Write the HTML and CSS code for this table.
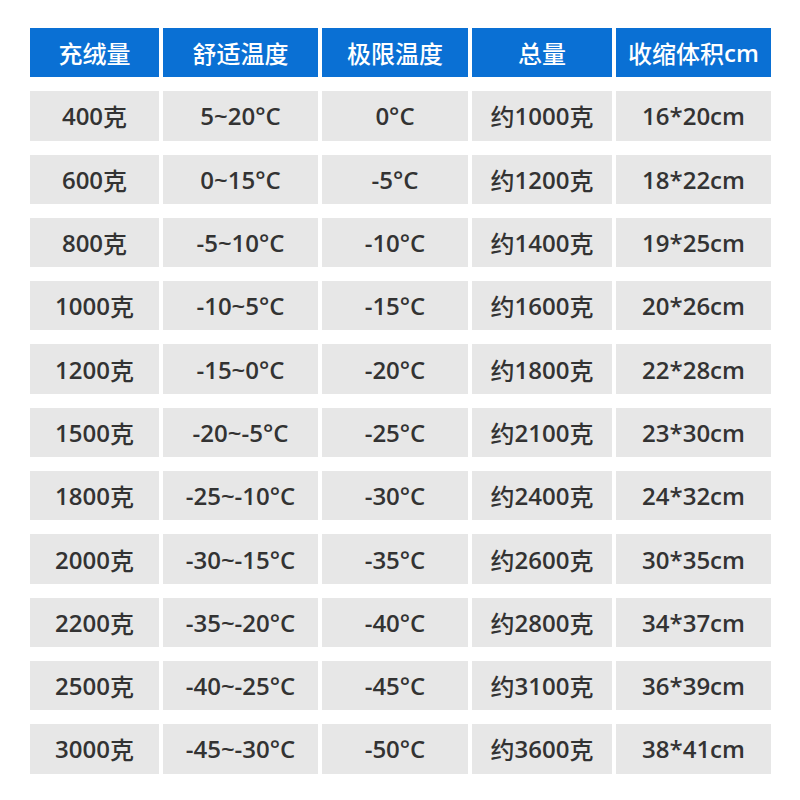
FILE: index.html
```html
<!DOCTYPE html>
<html lang="zh-CN">
<head>
<meta charset="utf-8">
<link rel="stylesheet" href="styles.css">
</head>
<body>
<div class="table">
  <div class="cell head">充绒量</div><div class="cell head">舒适温度</div><div class="cell head">极限温度</div><div class="cell head">总量</div><div class="cell head">收缩体积<span class="lat">cm</span></div>
  <div class="cell">400<span class="zh">克</span></div><div class="cell">5~20°C</div><div class="cell">0°C</div><div class="cell"><span class="zh">约</span>1000<span class="zh">克</span></div><div class="cell">16*20cm</div>
  <div class="cell">600<span class="zh">克</span></div><div class="cell">0~15°C</div><div class="cell">-5°C</div><div class="cell"><span class="zh">约</span>1200<span class="zh">克</span></div><div class="cell">18*22cm</div>
  <div class="cell">800<span class="zh">克</span></div><div class="cell">-5~10°C</div><div class="cell">-10°C</div><div class="cell"><span class="zh">约</span>1400<span class="zh">克</span></div><div class="cell">19*25cm</div>
  <div class="cell">1000<span class="zh">克</span></div><div class="cell">-10~5°C</div><div class="cell">-15°C</div><div class="cell"><span class="zh">约</span>1600<span class="zh">克</span></div><div class="cell">20*26cm</div>
  <div class="cell">1200<span class="zh">克</span></div><div class="cell">-15~0°C</div><div class="cell">-20°C</div><div class="cell"><span class="zh">约</span>1800<span class="zh">克</span></div><div class="cell">22*28cm</div>
  <div class="cell">1500<span class="zh">克</span></div><div class="cell">-20~-5°C</div><div class="cell">-25°C</div><div class="cell"><span class="zh">约</span>2100<span class="zh">克</span></div><div class="cell">23*30cm</div>
  <div class="cell">1800<span class="zh">克</span></div><div class="cell">-25~-10°C</div><div class="cell">-30°C</div><div class="cell"><span class="zh">约</span>2400<span class="zh">克</span></div><div class="cell">24*32cm</div>
  <div class="cell">2000<span class="zh">克</span></div><div class="cell">-30~-15°C</div><div class="cell">-35°C</div><div class="cell"><span class="zh">约</span>2600<span class="zh">克</span></div><div class="cell">30*35cm</div>
  <div class="cell">2200<span class="zh">克</span></div><div class="cell">-35~-20°C</div><div class="cell">-40°C</div><div class="cell"><span class="zh">约</span>2800<span class="zh">克</span></div><div class="cell">34*37cm</div>
  <div class="cell">2500<span class="zh">克</span></div><div class="cell">-40~-25°C</div><div class="cell">-45°C</div><div class="cell"><span class="zh">约</span>3100<span class="zh">克</span></div><div class="cell">36*39cm</div>
  <div class="cell">3000<span class="zh">克</span></div><div class="cell">-45~-30°C</div><div class="cell">-50°C</div><div class="cell"><span class="zh">约</span>3600<span class="zh">克</span></div><div class="cell">38*41cm</div>
</div>
</body>
</html>
```
FILE: styles.css
```css
html, body {
  margin: 0;
  padding: 0;
  background: #ffffff;
}
body {
  width: 800px;
  height: 800px;
  font-family: "Open Sans", "Noto Sans CJK SC", sans-serif;
}
.table {
  display: grid;
  grid-template-columns: 129px 155px 146px 140px 155px;
  grid-auto-rows: 49.3px;
  column-gap: 4px;
  row-gap: 14px;
  padding: 28px 0 0 30px;
}
.cell {
  display: flex;
  align-items: center;
  justify-content: center;
  background: #e7e7e7;
  color: #333333;
  font-size: 24px;
  font-weight: 600;
  white-space: nowrap;
}
.zh {
  font-family: "Noto Sans CJK SC", sans-serif;
  font-weight: 500;
}
.cell.head {
  background: #0a70d4;
  color: #ffffff;
  font-size: 24px;
  font-family: "Noto Sans CJK SC", sans-serif;
  font-weight: 500;
}
.lat {
  font-family: "Open Sans", sans-serif;
  font-weight: 600;
}
```
